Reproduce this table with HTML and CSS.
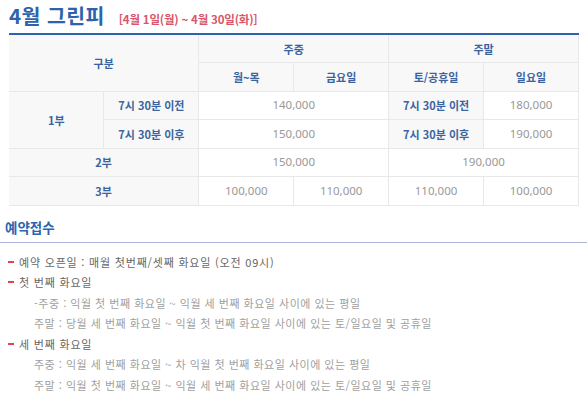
FILE: index.html
```html
<!DOCTYPE html>
<html lang="ko">
<head>
<meta charset="utf-8">
<link rel="stylesheet" href="styles.css">
</head>
<body>
<div class="page">
  <div class="title">
    <h1>4월 그린피</h1>
    <span class="period">[4월 1일(월) ~ 4월 30일(화)]</span>
  </div>
  <table class="fee">
    <colgroup><col><col><col><col><col><col></colgroup>
    <tr>
      <th class="first" colspan="2" rowspan="2">구분</th>
      <th colspan="2">주중</th>
      <th colspan="2">주말</th>
    </tr>
    <tr>
      <th>월~목</th>
      <th>금요일</th>
      <th>토/공휴일</th>
      <th>일요일</th>
    </tr>
    <tr>
      <th class="first" rowspan="2">1부</th>
      <th>7시 30분 이전</th>
      <td colspan="2">140,000</td>
      <th>7시 30분 이전</th>
      <td>180,000</td>
    </tr>
    <tr>
      <th>7시 30분 이후</th>
      <td colspan="2">150,000</td>
      <th>7시 30분 이후</th>
      <td>190,000</td>
    </tr>
    <tr>
      <th class="first" colspan="2">2부</th>
      <td colspan="2">150,000</td>
      <td colspan="2">190,000</td>
    </tr>
    <tr>
      <th class="first" colspan="2">3부</th>
      <td>100,000</td>
      <td>110,000</td>
      <td>110,000</td>
      <td>100,000</td>
    </tr>
  </table>

  <h2 class="section">예약접수</h2>
  <ul class="info">
    <li class="item">예약 오픈일 : 매월 첫번째/셋째 화요일 (오전 09시)</li>
    <li class="item">첫 번째 화요일</li>
    <li class="sub">-주중 : 익월 첫 번째 화요일 ~ 익월 세 번째 화요일 사이에 있는 평일</li>
    <li class="sub">주말 : 당월 세 번째 화요일 ~ 익월 첫 번째 화요일 사이에 있는 토/일요일 및 공휴일</li>
    <li class="item">세 번째 화요일</li>
    <li class="sub">주중 : 익월 세 번째 화요일 ~ 차 익월 첫 번째 화요일 사이에 있는 평일</li>
    <li class="sub">주말 : 익월 첫 번째 화요일 ~ 익월 세 번째 화요일 사이에 있는 토/일요일 및 공휴일</li>
  </ul>
</div>
</body>
</html>
```
FILE: styles.css
```css
* { box-sizing: border-box; }
html, body { margin: 0; padding: 0; background: #fff; }
body {
  font-family: "Noto Sans CJK KR", "Noto Sans", sans-serif;
  color: #666;
}
.page { padding: 0; }

.title {
  display: flex;
  align-items: baseline;
  gap: 14px;
  padding: 1px 9px 0;
  height: 33px;
}
.title h1 {
  margin: 0;
  font-size: 20.5px;
  line-height: 28px;
  font-weight: 700;
  color: #2d63ad;
  letter-spacing: 0.4px;
}
.title .period {
  font-size: 11.5px;
  font-weight: 700;
  color: #d9566a;
  letter-spacing: -0.2px;
}

.fee {
  margin-left: 9px;
  width: 570px;
  table-layout: fixed;
  border-collapse: collapse;
  border-top: 2px solid #2d63ad;
  font-size: 11px;
}
.fee th, .fee td {
  border: 1px solid #e8e8e8;
  height: 28.5px;
  padding: 0;
  text-align: center;
  vertical-align: middle;
  line-height: 14px;
}
.fee tr:first-child th { border-top: 0; }
.fee th {
  background: #f8f8f8;
  color: #3a64a0;
  font-weight: 700;
}
.fee th.first { border-left: 0; }
.fee td {
  background: #fff;
  color: #999;
  font-family: "Noto Sans", sans-serif;
  font-size: 11.5px;
}

.section {
  margin: 10px 0 0;
  padding: 0 0 4px 5px;
  font-size: 13.5px;
  line-height: 22px;
  font-weight: 700;
  color: #2d63ad;
  border-bottom: 1px solid #aab6d8;
}
.info {
  list-style: none;
  margin: 9px 0 0;
  padding: 0;
  font-size: 11px;
  line-height: 20.5px;
}
.info .item {
  display: flex;
  align-items: center;
  gap: 5px;
  padding-left: 8px;
  color: #666;
  letter-spacing: 0.8px;
}
.info .item::before {
  content: "";
  display: block;
  width: 6px;
  height: 2px;
  background: #e0444f;
}
.info .sub {
  padding-left: 34px;
  color: #a0a0a0;
  letter-spacing: 0.5px;
}
```
